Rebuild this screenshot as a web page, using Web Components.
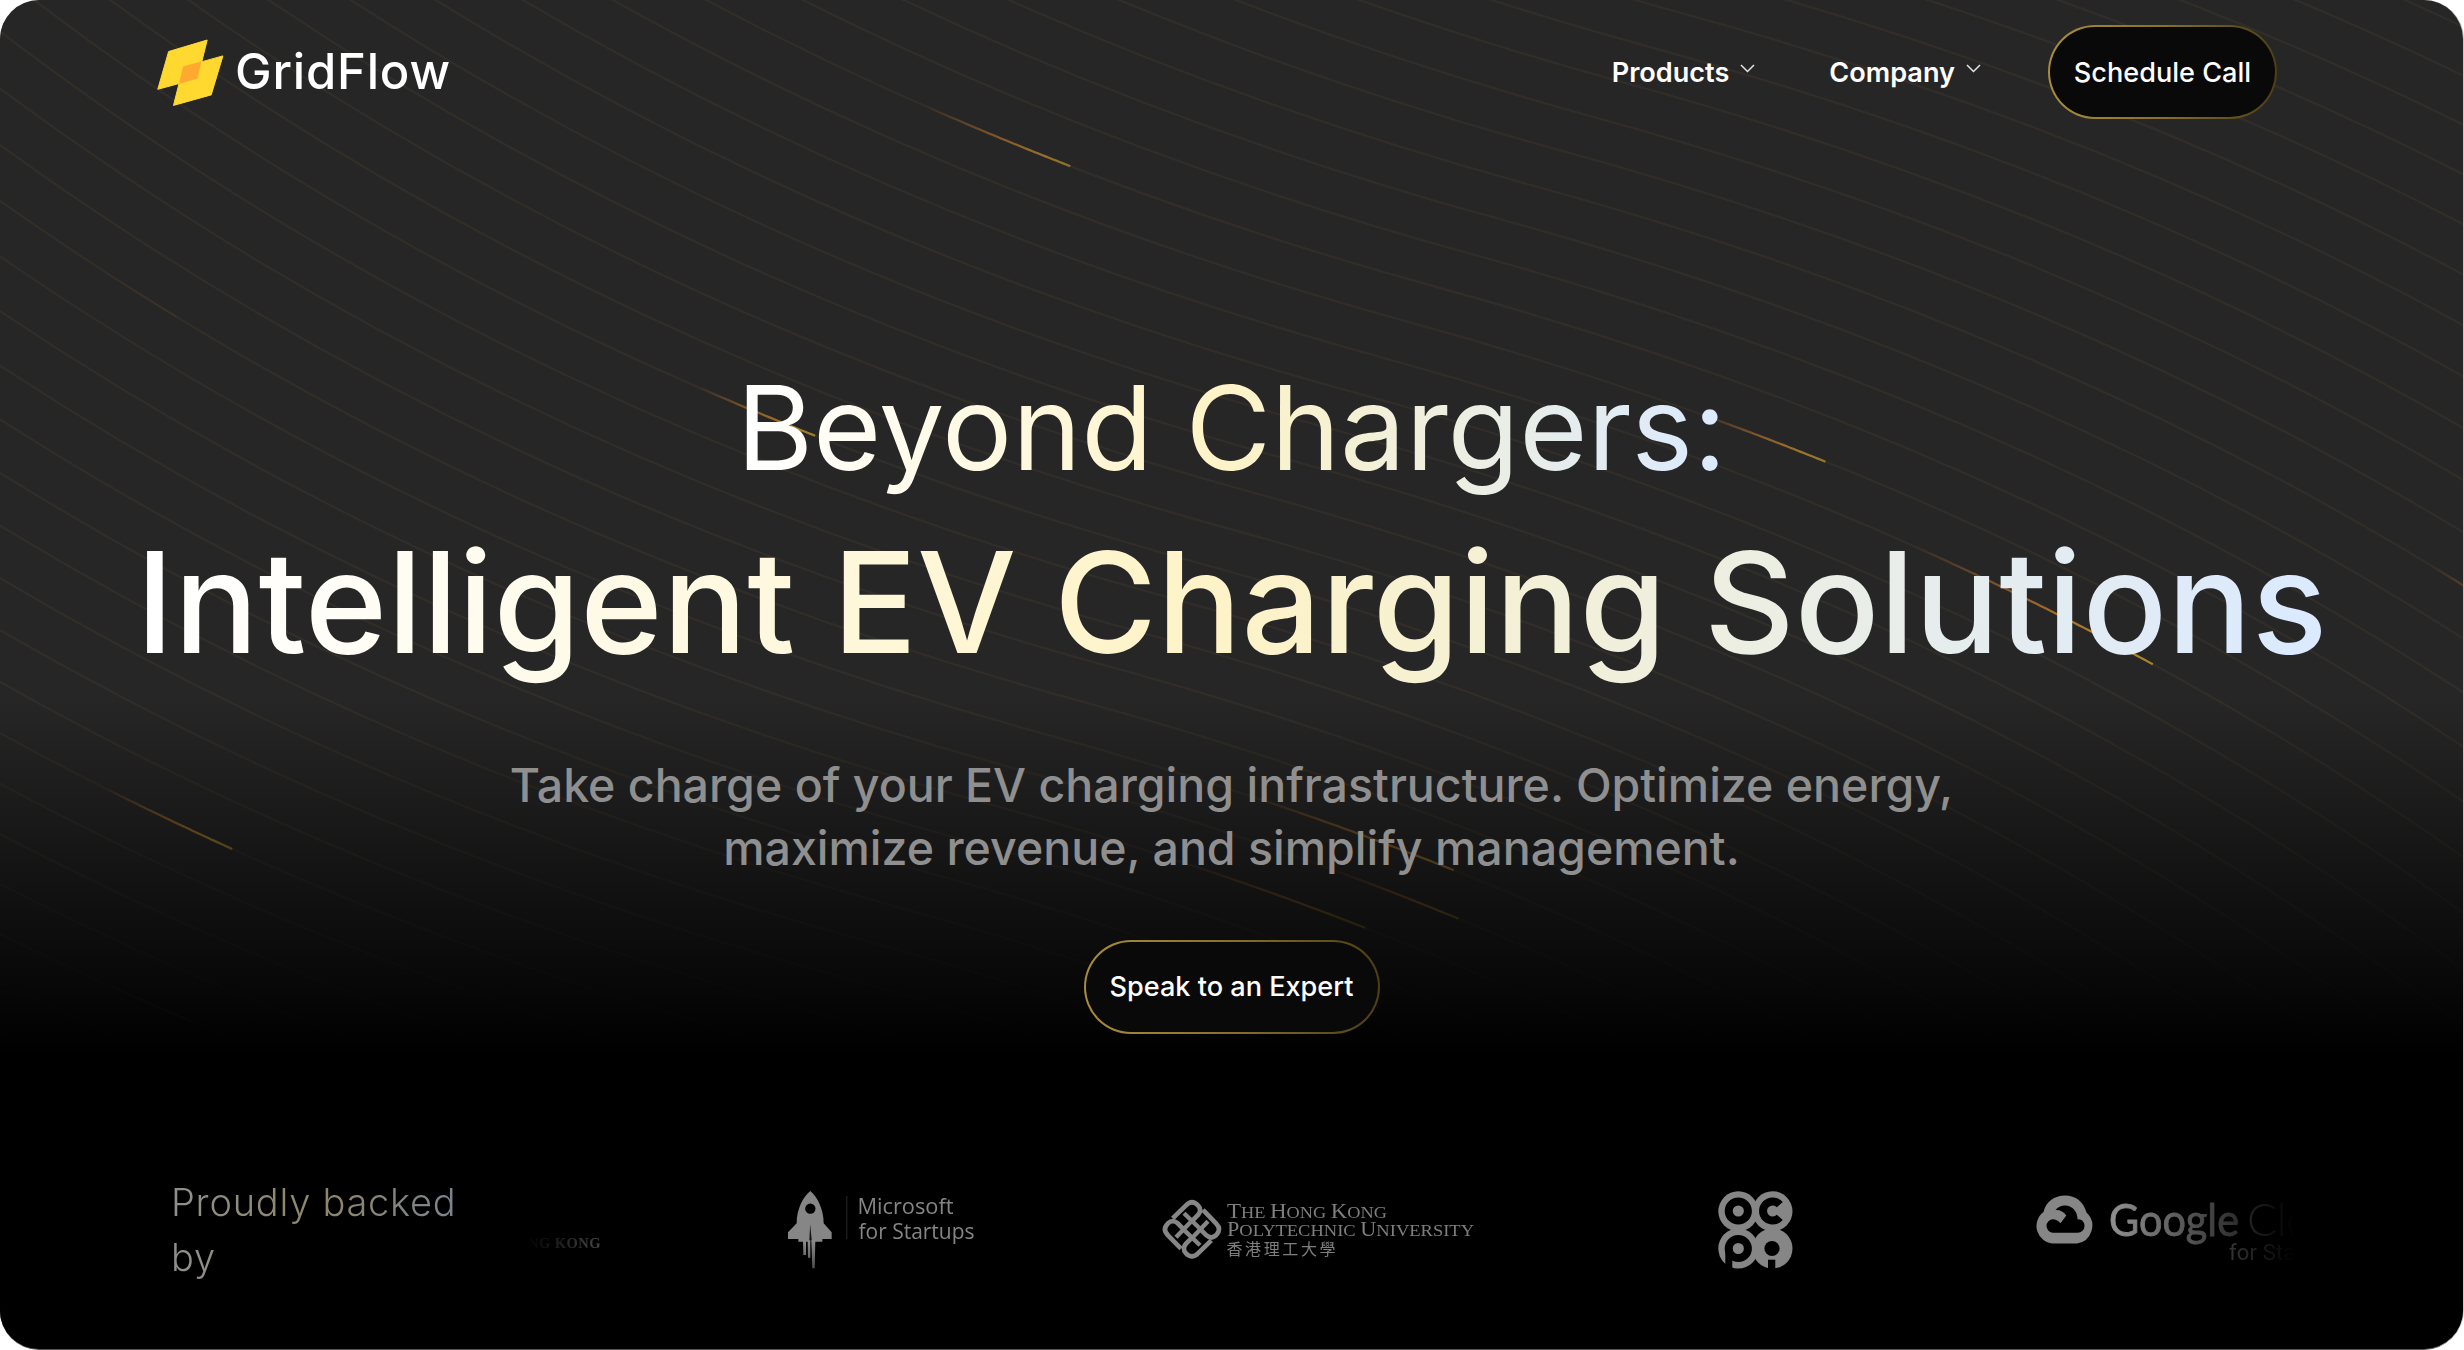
<!DOCTYPE html>
<html lang="en">
<head>
<meta charset="utf-8">
<title>GridFlow</title>
<style>
html,body{margin:0;background:#fff}
body{width:2464px;height:1350px;overflow:hidden;font-family:Inter,"Liberation Sans",sans-serif;color:#fff}
</style>
</head>
<body>
<gf-page>
  <gf-header slot="header">
    <gf-nav-item>Products</gf-nav-item>
    <gf-nav-item>Company</gf-nav-item>
    <gf-button slot="action">Schedule Call</gf-button>
  </gf-header>
  <gf-hero>
    <span slot="eyebrow">Beyond Chargers:</span>
    <span slot="title">Intelligent EV Charging Solutions</span>
    <span slot="copy">Take charge of your EV charging infrastructure. Optimize energy,<br>maximize revenue, and simplify management.</span>
    <gf-button slot="action" style="--w:296px;--pt:0px">Speak to an Expert</gf-button>
  </gf-hero>
  <gf-backers>
    <span slot="label">Proudly backed<br>by</span>
    <gf-logo-hku></gf-logo-hku>
    <gf-logo-microsoft></gf-logo-microsoft>
    <gf-logo-polyu></gf-logo-polyu>
    <gf-logo-ocpa></gf-logo-ocpa>
    <gf-logo-google></gf-logo-google>
  </gf-backers>
</gf-page>
<script>
const define = (name, html, setup) => customElements.define(name, class extends HTMLElement {
  constructor() {
    super();
    this.attachShadow({ mode: 'open' }).innerHTML = html;
    if (setup) setup(this.shadowRoot);
  }
});

/* Flowing line field with glowing streaks travelling along it */
define('gf-beams', `
<style>
:host{display:block;width:100%;height:100%}
svg{display:block;width:100%;height:100%}
</style>
<svg viewBox="0 0 2464 1350" preserveAspectRatio="none">
  <g id="lines" fill="none" stroke="#ffb84a" stroke-opacity=".052" stroke-width=".55" transform="matrix(4.3025 0 0 4.3022 -233.87 -16.24)"></g>
  <g id="streaks" fill="none" stroke-width="2.2"></g>
</svg>`, root => {
  const S = 4.3024, OX = -233.87, OY = -16.24;
  const d = 'M-380 -189C-380 -189 -312 216 152 343C616 470 684 875 684 875';
  let out = '';
  for (let k = 0; k < 50; k++) out += `<path transform="translate(${7 * k} ${-8 * k})" d="${d}"/>`;
  root.getElementById('lines').innerHTML = out;

  const base = [];
  const cubic = (a, b, c, e) => {
    for (let i = 0; i <= 1500; i++) {
      const t = i / 1500, u = 1 - t;
      base.push([0, 1].map(j => u*u*u*a[j] + 3*u*u*t*b[j] + 3*u*t*t*c[j] + t*t*t*e[j]));
    }
  };
  cubic([-380,-189],[-380,-189],[-312,216],[152,343]);
  cubic([152,343],[616,470],[684,875],[684,875]);
  const line = k => base.map(p => [S * (p[0] + 7 * k) + OX, S * (p[1] - 8 * k) + OY]);
  const field = Array.from({ length: 50 }, (_, k) => line(k));
  const near = (x, y) => {
    let best = 1e9, hit;
    for (const l of field) for (const p of l) {
      const r = Math.hypot(p[0] - x, p[1] - y);
      if (r < best) { best = r; hit = l; }
    }
    return hit;
  };
  // [tail x, head x, head y, strength]
  const streaks = [
    [925,1071,166,.66],[698,818,436,.76],[1700,1829,463,.72],[1915,2155,666,.85],
    [105,235,850.5,.68],[108,193,1022,.18],[1255,1455,871.7,.6],[1335,1460,920,.42],
    [1180,1367,929,.42],[2430,2600,662,.7],[100,178,316,.05]
  ];
  root.getElementById('streaks').innerHTML = streaks.map(([x0, x1, y1, o], i) => {
    const pts = near(x1, y1).filter(p => p[0] >= x0 && p[0] <= x1);
    return `<linearGradient id="s${i}" gradientUnits="userSpaceOnUse" x1="${x0}" y1="0" x2="${x1}" y2="0">
      <stop offset="0" stop-color="#e0762a" stop-opacity="0"/><stop offset=".5" stop-color="#d8822c" stop-opacity=".75"/>
      <stop offset=".8" stop-color="#c8922c"/><stop offset="1" stop-color="#b8962a"/></linearGradient>
      <path opacity="${o}" stroke="url(#s${i})" d="M${pts.map(p => p[0].toFixed(1) + ' ' + p[1].toFixed(1)).join('L')}"/>`;
  }).join('');
});

define('gf-page', `
<style>
:host{display:grid;width:2463px;height:1349px;border-radius:39px;overflow:hidden;background:#262626;box-shadow:1px 0 #c8c8c8,0 1px #555}
gf-beams,.shade,main{grid-area:1/1;min-width:0;min-height:0}
gf-beams{width:2463px;height:1349px}
.shade{z-index:1;background:linear-gradient(#0000 0,#0000 698px,#000 1055px)}
main{z-index:2;display:flex;flex-direction:column}
</style>
<gf-beams></gf-beams><div class="shade"></div>
<main><slot name="header"></slot><slot></slot></main>`);

define('gf-header', `
<style>
:host{display:flex;align-items:center;height:144px;padding:0 186px 0 157px}
.brand{display:flex;align-items:center;gap:11px}
.brand svg{width:67px;height:67px}
.brand b{font-weight:500;font-size:49px;line-height:60px;letter-spacing:.8px;margin-bottom:1px}
nav{display:flex;align-items:center;margin-left:auto}
nav ::slotted(gf-nav-item){margin-right:74px}
.act{display:flex;margin-left:-7px}
</style>
<div class="brand">
<svg viewBox="157 38.5 67 67"><g fill="#ffd930" stroke="#ffd930" stroke-width="1" stroke-linejoin="round"><path d="M168.6 51 207.2 39.5 197.6 78 157.8 88.8Z"/><path d="M183.2 66.4 222.9 55.4 211.2 94.4 173.5 104.9Z"/></g><path fill="#ffa931" d="M183 66 201.3 61 197.6 78 179 83.4Z"/></svg>
<b>GridFlow</b></div>
<nav><slot></slot></nav><div class="act"><slot name="action"></slot></div>`);

define('gf-nav-item', `
<style>
:host{display:flex;align-items:center;gap:11px;font-size:27.1px;font-weight:600;line-height:36px;padding-top:2px}
svg{width:15px;height:9px;margin-top:-9px}
</style>
<slot></slot><svg viewBox="0 0 15 9"><path d="M1 1 7.5 7.5 14 1" fill="none" stroke="#e4e4e4" stroke-width="1.5"/></svg>`);

define('gf-button', `
<style>
:host{display:flex;align-items:center;justify-content:center;box-sizing:border-box;width:var(--w,229px);height:94px;
border:2.5px solid transparent;border-radius:47px;font-size:27.1px;font-weight:550;line-height:36px;padding-top:var(--pt,2px);white-space:nowrap;
background:linear-gradient(#090909,#090909) padding-box,linear-gradient(to right,#a98d3b,#86702b 50%,#4c3f14) border-box}
</style><slot></slot>`);

define('gf-hero', `
<style>
:host{display:flex;flex-direction:column;align-items:center;padding-top:213px}
h1{display:flex;flex-direction:column;align-items:center;margin:0;white-space:nowrap}
h1 div{background:linear-gradient(95deg,#fff 2%,#fef3c7 49%,#dbeafe 98%);-webkit-background-clip:text;background-clip:text;color:transparent}
.a{font-size:117.2px;font-weight:400;line-height:140px;letter-spacing:-.2px}
.b{font-size:140.4px;font-weight:500;line-height:170px;margin-top:20px}
p{margin:67px 0 61px;font-size:46.5px;font-weight:450;line-height:62.7px;text-align:center;color:#8f8f8f;white-space:nowrap}
</style>
<h1><div class="a"><slot name="eyebrow"></slot></div><div class="b"><slot name="title"></slot></div></h1>
<p><slot name="copy"></slot></p><slot name="action"></slot>`);

define('gf-backers', `
<style>
:host{display:flex;margin-top:141px;padding-left:171px}
.label{width:354px;flex:none}
.label div{width:286px;font-size:38px;font-weight:350;line-height:54.6px;letter-spacing:.75px;opacity:.56;
background:linear-gradient(to right,#fff,#fef0bb 50%,#dbeafe);-webkit-background-clip:text;background-clip:text;color:transparent;white-space:nowrap}
.strip{display:flex;width:1770px;height:110px;overflow:hidden;
-webkit-mask:linear-gradient(to right,#0000,#000 177px,#000 1593px,#0000);mask:linear-gradient(to right,#0000,#000 177px,#000 1593px,#0000)}
</style>
<div class="label"><div><slot name="label"></slot></div></div><div class="strip"><slot></slot></div>`);

const G = '#868686';
define('gf-logo-hku', `
<style>:host{display:block;flex:none;width:76px;margin-right:187px}svg{display:block}</style>
<svg width="76" height="110"><text x="75.5" y="72.5" text-anchor="end" textLength="96" font-family="Liberation Serif" font-weight="700" font-size="14.5" fill="#a0a0a0">HONG KONG</text></svg>`);

define('gf-logo-microsoft', `
<style>:host{display:block;flex:none;width:187px;margin-right:187px}svg{display:block}</style>
<svg width="187" height="110" viewBox="788 1176 187 110">
<defs><linearGradient id="f" x1="0" y1="0" x2="0" y2="1"><stop offset="0" stop-color="#8c8c8c"/><stop offset="1" stop-color="#505050"/></linearGradient></defs>
<g transform="translate(760 1170) scale(.33333)">
<path fill="${G}" d="M151 66C172 84 191 120 191 163L215 190V210H187V218H115V210H84V190L110 163C110 120 129 84 151 66Z"/>
<circle cx="151" cy="119" r="15.500" fill="#000"/>
<path fill="#000" d="M150.500 166 147 232H157Z" opacity=".85"/>
<path fill="url(#f)" d="M129 214H138V258H130ZM143 214H151V266H144ZM154 214H166L164 298H157Z"/>
</g>
<path d="M846.700 1197V1240" stroke="#1c1c1c" stroke-width="1.500"/>
<g fill="#858585" font-family="Open Sans" font-size="22"><text x="857.500" y="1214.500" textLength="96" lengthAdjust="spacingAndGlyphs">Microsoft</text><text x="858.500" y="1240" textLength="116" lengthAdjust="spacingAndGlyphs">for Startups</text></g>
</svg>`);

define('gf-logo-polyu', `
<style>:host{display:block;flex:none;width:312px;margin-right:244px}svg{display:block}</style>
<svg width="312" height="110" viewBox="1162 1176 312 110">
<g transform="translate(1192 1230.300) scale(.33333)" fill="none" stroke="${G}" stroke-width="14">
<g id="arm"><path d="M-58-33-18-72Q0-90 18-72 31-58 18-43L2-27"/><path d="M-24-48 22-4" stroke-width="13"/></g>
<use href="#arm" transform="rotate(90)"/><use href="#arm" transform="rotate(180)"/><use href="#arm" transform="rotate(270)"/>
</g>
<g fill="#7e7e7e" font-family="Liberation Serif" font-size="17.500">
<text x="1227" y="1219" textLength="160" lengthAdjust="spacingAndGlyphs"><tspan font-size="22">T</tspan>HE <tspan font-size="22">H</tspan>ONG <tspan font-size="22">K</tspan>ONG</text>
<text x="1227" y="1237.200" textLength="247" lengthAdjust="spacingAndGlyphs"><tspan font-size="21">P</tspan>OLYTECHNIC <tspan font-size="21">U</tspan>NIVERSITY</text>
<text x="1226.500" y="1255.500" textLength="109" font-family="Noto Sans CJK TC" font-size="16">香港理工大學</text></g>
</svg>`);

define('gf-logo-ocpa', `
<style>:host{display:block;flex:none;width:75px;margin-right:243px}svg{display:block}</style>
<svg width="75" height="110" viewBox="1717.700 1176 75 110">
<g fill="${G}"><circle cx="1738" cy="1212.300" r="20"/><circle cx="1772.200" cy="1212.300" r="20"/><circle cx="1738" cy="1249.500" r="20"/><circle cx="1772.200" cy="1249.500" r="20"/></g>
<path d="M1755 1224.500 1761.500 1231 1755 1237.500 1748.500 1231Z" fill="#000"/>
<g fill="none" stroke="#000" stroke-width="8">
<circle cx="1738" cy="1212" r="9.600"/><path d="M1779.500 1205.600A9.600 9.600 0 1 0 1779.500 1218.400"/>
<circle cx="1738" cy="1249.500" r="9.600"/></g>
<path d="M1725 1249.500H1732V1271H1725Z" fill="#000"/>
<circle cx="1771.700" cy="1249.500" r="7.600" fill="#000"/><path d="M1767.700 1260.700H1775V1271H1767.700Z" fill="#000"/>
</svg>`);

define('gf-logo-google', `
<style>:host{display:block;flex:none;width:300px}svg{display:block}</style>
<svg width="300" height="110" viewBox="2036 1176 300 110">
<path fill="${G}" d="M2053.500 1244.500A17.500 17.500 0 0 1 2043.500 1213C2046 1203 2054 1196.600 2065 1196.600 2076 1196.600 2083.500 1203 2086.500 1213.500A18 18 0 0 1 2077 1244.500Z"/>
<path fill="#000" d="M2052.500 1233.800A6.800 6.800 0 0 1 2052.500 1220.300Q2057 1220.300 2060.500 1224.300L2066.300 1216.500Q2062 1210.500 2055.500 1211 2059 1206.500 2065 1206.500C2073 1206.500 2077.500 1213 2077.500 1220.300 2082 1220 2084.500 1223 2084.500 1227A6.800 6.800 0 0 1 2077.700 1233.800Z"/>
<text x="2109" y="1236.700" font-family="Lato" font-size="44.500" font-weight="400" fill="#8c8c8c" stroke="#8c8c8c" stroke-width=".8" textLength="130" lengthAdjust="spacingAndGlyphs">Google</text>
<text x="2247" y="1236.700" font-family="Lato" font-size="44.500" font-weight="300" fill="#808080" textLength="112">Cloud</text>
<text x="2229" y="1260.700" font-family="Roboto" font-size="22" fill="#909090" textLength="118">for Startups</text>
</svg>`);
</script>
</body>
</html>
